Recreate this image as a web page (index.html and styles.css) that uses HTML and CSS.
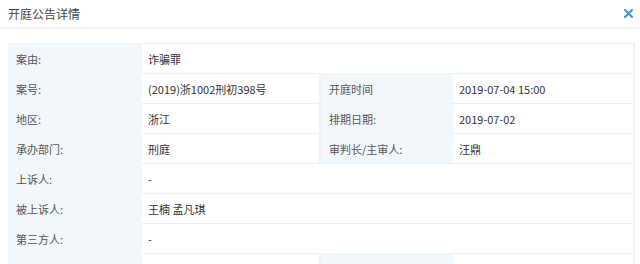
FILE: index.html
```html
<!DOCTYPE html>
<html lang="zh-CN">
<head>
    <meta charset="UTF-8">
    <title>开庭公告详情</title>
    <link rel="stylesheet" href="styles.css">
</head>
<body>
    <div class="dialog">
        <div class="dialog-header">
            <span class="dialog-title">开庭公告详情</span>
            <span class="dialog-close">
                <svg width="9" height="9" viewBox="0 0 9 9"><path d="M1 1L8 8M8 1L1 8" stroke="#3d8fd9" stroke-width="2" stroke-linecap="round"/></svg>
            </span>
        </div>
        <div class="dialog-body">
            <table class="detail-table">
                <colgroup>
                    <col class="col-label">
                    <col class="col-value">
                    <col class="col-label2">
                    <col class="col-value2">
                </colgroup>
                <tr>
                    <td class="label">案由:</td>
                    <td class="value" colspan="3">诈骗罪</td>
                </tr>
                <tr>
                    <td class="label">案号:</td>
                    <td class="value">(2019)浙1002刑初398号</td>
                    <td class="label">开庭时间</td>
                    <td class="value">2019-07-04 15:00</td>
                </tr>
                <tr>
                    <td class="label">地区:</td>
                    <td class="value">浙江</td>
                    <td class="label">排期日期:</td>
                    <td class="value">2019-07-02</td>
                </tr>
                <tr>
                    <td class="label">承办部门:</td>
                    <td class="value">刑庭</td>
                    <td class="label">审判长/主审人:</td>
                    <td class="value">汪鼎</td>
                </tr>
                <tr>
                    <td class="label">上诉人:</td>
                    <td class="value" colspan="3">-</td>
                </tr>
                <tr>
                    <td class="label">被上诉人:</td>
                    <td class="value" colspan="3">王楠 孟凡琪</td>
                </tr>
                <tr>
                    <td class="label">第三方人:</td>
                    <td class="value" colspan="3">-</td>
                </tr>
                <tr>
                    <td class="label"></td>
                    <td class="value"></td>
                    <td class="label"></td>
                    <td class="value"></td>
                </tr>
            </table>
        </div>
    </div>
</body>
</html>
```

FILE: styles.css
```css
html, body {
    margin: 0;
    background-color: #fff;
    font-family: "Noto Sans CJK SC", "Noto Sans", sans-serif;
    color: #333;
    overflow: hidden;
}

.dialog-header {
    height: 27px;
    padding: 0 7px 0 8px;
    display: flex;
    align-items: center;
    justify-content: space-between;
    border-bottom: 1px solid #f0f0f0;
    box-shadow: 0 2px 2px rgba(0, 0, 0, 0.03);
}

.dialog-title {
    font-size: 12px;
    color: #444;
}

.dialog-close {
    display: flex;
    align-items: center;
    cursor: pointer;
}

.dialog-body {
    padding: 15px 6px 0 8px;
}

.detail-table {
    width: 626px;
    border-collapse: collapse;
    table-layout: fixed;
    font-size: 11px;
}

.col-label {
    width: 134px;
}

.col-value {
    width: 178px;
}

.col-label2 {
    width: 133px;
}

.col-value2 {
    width: 181px;
}

.detail-table td {
    height: 29px;
    padding: 0 0 0 8px;
    border-top: 1px solid #eceef0;
    white-space: nowrap;
}

.detail-table td.label {
    background-color: #f2f7fc;
    border-top-color: #f2f7fc;
    color: #555;
}

.detail-table td.value {
    padding-left: 6px;
    border-right: 2px solid #f2f2f2;
}
```
